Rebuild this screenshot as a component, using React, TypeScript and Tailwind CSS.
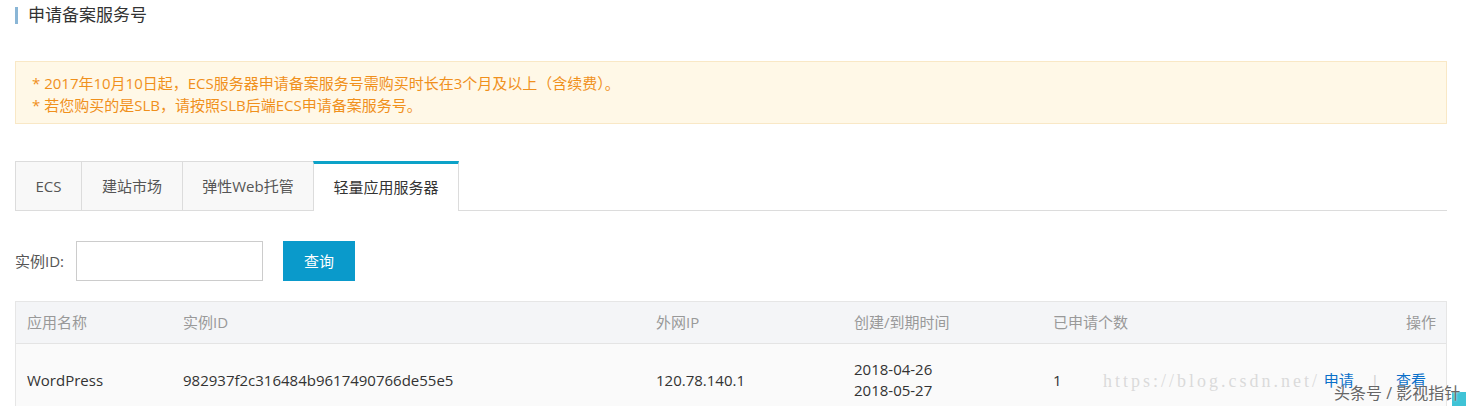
import React from 'react';

const font = {
  fontFamily: '"Open Sans", "Noto Sans CJK SC", sans-serif',
};

const tabs = [
  { label: 'ECS', w: 'w-[66px]' },
  { label: '建站市场', w: 'w-[101px]' },
  { label: '弹性Web托管', w: 'w-[131px]' },
  { label: '轻量应用服务器', w: 'w-[146px]' },
];

const App: React.FC = () => {
  const active = 3;

  return (
    <div className="relative w-[1466px] h-[406px] overflow-hidden bg-white text-[#333]" style={font}>
      <div className="pl-[15px] pr-[19px] pt-[6px]">
        {/* title */}
        <div className="flex items-center h-[18px]">
          <span className="w-[3px] h-[17px] bg-[#8ab6d6]" />
          <span className="ml-[10px] text-[17px] leading-[18px] text-[#333]">申请备案服务号</span>
        </div>

        {/* notice */}
        <div className="mt-[37px] h-[63px] border border-[#f9e8c6] bg-[#fff8e7] pl-[16px] pt-[10px] text-[15px] leading-[22px] text-[#f0901c]">
          <p>* 2017年10月10日起，ECS服务器申请备案服务号需购买时长在3个月及以上（含续费）。</p>
          <p>* 若您购买的是SLB，请按照SLB后端ECS申请备案服务号。</p>
        </div>

        {/* tabs */}
        <div className="mt-[37px] flex border-b border-[#dcdcdc]">
          {tabs.map((t, i) =>
            i === active ? (
              <div
                key={t.label}
                className={`${t.w} -mb-px h-[50px] border-x border-[#dcdcdc] border-t-[3px] border-t-[#0ca2c8] bg-white flex items-center justify-center text-[15px] text-[#333]`}
              >
                {t.label}
              </div>
            ) : (
              <div
                key={t.label}
                className={`${t.w} h-[49px] border-t border-l border-[#dcdcdc] bg-[#f8f8f8] flex items-center justify-center text-[15px] text-[#555]`}
              >
                {t.label}
              </div>
            )
          )}
        </div>

        {/* search */}
        <div className="mt-[30px] flex items-center h-[40px]">
          <span className="text-[15px] text-[#555]">实例ID:</span>
          <input className="ml-[12px] h-[40px] w-[187px] border border-[#ccc] bg-white outline-none" />
          <button className="ml-[20px] h-[40px] w-[72px] bg-[#0a9acb] text-[15px] text-white">查询</button>
        </div>

        {/* table */}
        <div className="mt-[20px] border border-[#e6e6e6]">
          <div className="grid grid-cols-[156px_473px_198px_199px_1fr_auto] h-[42px] items-center bg-[#f4f5f7] border-b border-[#e4e4e4] text-[15px] text-[#999]">
            <div className="px-[11px]">应用名称</div>
            <div className="px-[11px]">实例ID</div>
            <div className="px-[11px]">外网IP</div>
            <div className="px-[11px]">创建/到期时间</div>
            <div className="px-[11px]">已申请个数</div>
            <div className="pr-[10px] text-right">操作</div>
          </div>
          <div className="grid grid-cols-[156px_473px_198px_199px_1fr_auto] h-[72px] items-center bg-[#fafafa] text-[15px] text-[#333]">
            <div className="px-[11px]">WordPress</div>
            <div className="px-[11px]">982937f2c316484b9617490766de55e5</div>
            <div className="px-[11px]">120.78.140.1</div>
            <div className="px-[11px] leading-[21px]">
              <div>2018-04-26</div>
              <div>2018-05-27</div>
            </div>
            <div className="px-[11px]">1</div>
            <div className="relative z-10 pr-[20px] flex items-center text-[#0a6fc9]">
              <span>申请</span>
              <span className="mx-[17px] text-[#ccc]">|</span>
              <span>查看</span>
            </div>
          </div>
        </div>
      </div>

      {/* watermarks */}
      <span
        className="absolute left-[1103px] top-[368px] text-[18px] text-[#dadada]"
        style={{ fontFamily: '"Liberation Serif", serif', letterSpacing: '3px' }}
      >
        https://blog.csdn.net/
      </span>
      <span
        className="absolute z-20 left-[1334px] top-[381px] text-[16px] text-[#666]"
        style={{ textShadow: '0 0 2px #fff' }}
      >
        头条号 / 影视指针
      </span>
      <span className="absolute left-[1452px] top-[392px] w-[14px] h-[14px] bg-[#3fc3d6]" />
    </div>
  );
};

export default App;
